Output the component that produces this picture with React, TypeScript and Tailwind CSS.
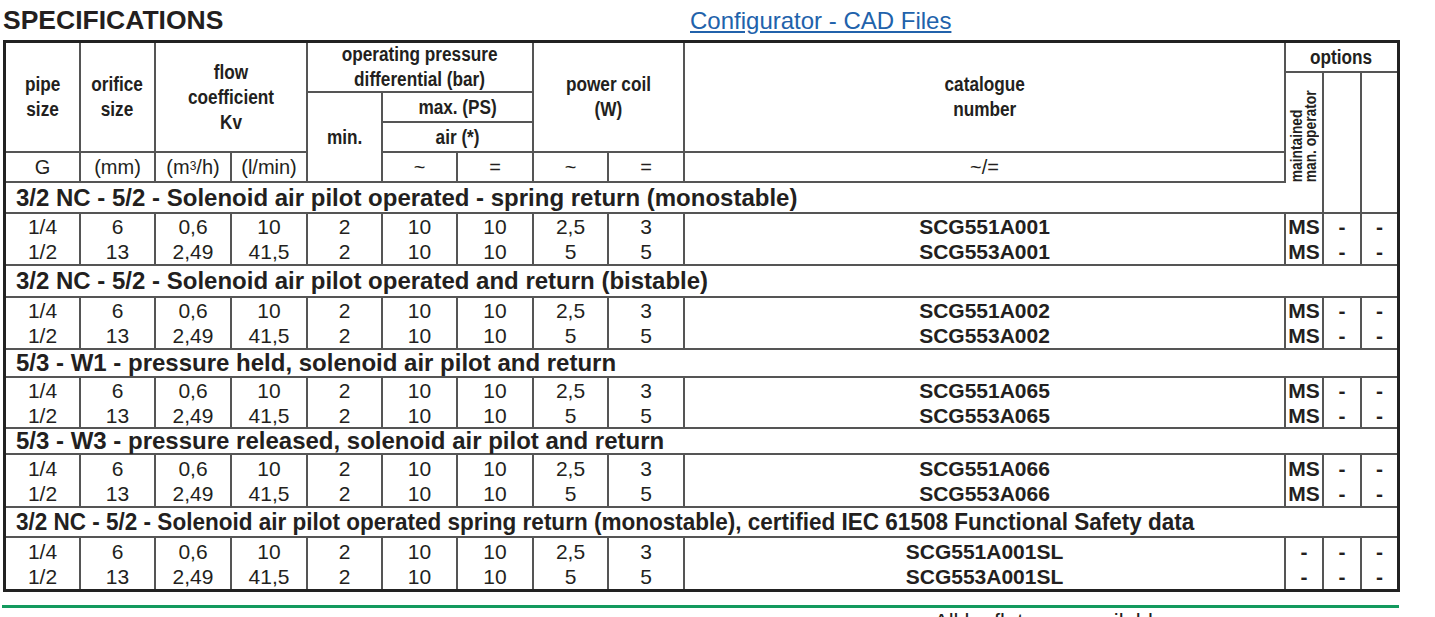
import React from "react";

const groups = [
  {
    title: "3/2 NC - 5/2 - Solenoid air pilot operated - spring return (monostable)",
    codes: ["SCG551A001", "SCG553A001"],
    ms: true,
    first: true,
  },
  {
    title: "3/2 NC - 5/2 - Solenoid air pilot operated and return (bistable)",
    codes: ["SCG551A002", "SCG553A002"],
    ms: true,
  },
  {
    title: "5/3 - W1 - pressure held, solenoid air pilot and return",
    codes: ["SCG551A065", "SCG553A065"],
    ms: true,
  },
  {
    title: "5/3 - W3 - pressure released, solenoid air pilot and return",
    codes: ["SCG551A066", "SCG553A066"],
    ms: true,
  },
  {
    title:
      "3/2 NC - 5/2 - Solenoid air pilot operated spring return (monostable), certified IEC 61508 Functional Safety data",
    codes: ["SCG551A001SL", "SCG553A001SL"],
    ms: false,
    narrow: true,
  },
];

const values: [string, string][] = [
  ["1/4", "1/2"],
  ["6", "13"],
  ["0,6", "2,49"],
  ["10", "41,5"],
  ["2", "2"],
  ["10", "10"],
  ["10", "10"],
  ["2,5", "5"],
  ["3", "5"],
];

const hd = "bg-white flex items-center justify-center text-center font-bold text-[20px] leading-[25px]";
const unit = "bg-white flex items-center justify-center text-[20px] leading-none";

function H({ className, children }: { className: string; children: React.ReactNode }) {
  return (
    <div className={hd + " " + className}>
      <div className="scale-x-[0.86] whitespace-nowrap">{children}</div>
    </div>
  );
}

function Two({ a, b, bold }: { a: string; b: string; bold?: boolean }) {
  return (
    <div
      className={
        "bg-white flex flex-col items-center justify-center text-[21px] leading-[25px] " +
        (bold ? "font-bold" : "")
      }
    >
      <span>{a}</span>
      <span>{b}</span>
    </div>
  );
}

export default function App() {
  return (
    <div className="w-[1435px] h-[617px] overflow-hidden bg-white text-[#231f20] font-['Liberation_Sans',Arial,sans-serif]">
      <div className="flex h-[40px] items-start">
        <div className="w-[690px] pl-[3px] pt-[7px] text-[26.5px] font-bold leading-none">
          SPECIFICATIONS
        </div>
        <a className="pt-[9px] text-[24px] leading-none underline text-[#2162ab]" href="#">
          Configurator - CAD Files
        </a>
      </div>

      <div className="ml-[3px] w-[1397px] grid grid-cols-[73px_73px_74px_74px_73px_73px_74px_73px_74px_599px_36px_36px_35px] grid-rows-[48px_28px_28px_28px_29px_50px_30px_50px_26px_49px_24px_51px_28px_51px] gap-[2px] bg-[#555] border-[3px] border-[#222]">
        {/* header */}
        <H className="col-start-1 row-start-1 row-span-3">
          pipe
          <br />
          size
        </H>
        <H className="col-start-2 row-start-1 row-span-3">
          orifice
          <br />
          size
        </H>
        <H className="col-start-3 col-span-2 row-start-1 row-span-3">
          flow
          <br />
          coefficient
          <br />
          Kv
        </H>
        <H className="col-start-5 col-span-3 row-start-1">
          operating pressure
          <br />
          differential (bar)
        </H>
        <H className="col-start-5 row-start-2 row-span-3">min.</H>
        <H className="col-start-6 col-span-2 row-start-2">max. (PS)</H>
        <H className="col-start-6 col-span-2 row-start-3">air (*)</H>
        <H className="col-start-8 col-span-2 row-start-1 row-span-3">
          power coil
          <br />
          (W)
        </H>
        <H className="col-start-10 row-start-1 row-span-3">
          catalogue
          <br />
          number
        </H>
        <div className="col-start-11 col-span-3 row-start-1 row-span-4 grid grid-rows-[28px_108px] gap-[2px]">
          <H className="">options</H>
          <div className="grid grid-cols-[36px_36px_35px] gap-[2px]">
            <div className="bg-white flex items-center justify-center">
              <div className="mt-[10px] [writing-mode:vertical-rl] rotate-180 scale-y-[0.86] text-left font-bold text-[16px] leading-[14px] whitespace-nowrap">
                maintained
                <br />
                man. operator
              </div>
            </div>
            <div className="bg-white" />
            <div className="bg-white" />
          </div>
        </div>

        {/* units row */}
        <div className={unit + " col-start-1 row-start-4"}>G</div>
        <div className={unit + " col-start-2 row-start-4"}>(mm)</div>
        <div className={unit + " col-start-3 row-start-4"}>
          (m<sup className="text-[12px] relative -top-[1px]">3</sup>/h)
        </div>
        <div className={unit + " col-start-4 row-start-4"}>(l/min)</div>
        <div className={unit + " col-start-6 row-start-4"}>~</div>
        <div className={unit + " col-start-7 row-start-4"}>=</div>
        <div className={unit + " col-start-8 row-start-4"}>~</div>
        <div className={unit + " col-start-9 row-start-4"}>=</div>
        <div className={unit + " col-start-10 row-start-4"}>~/=</div>

        {/* body */}
        {groups.map((g, gi) => (
          <React.Fragment key={gi}>
            {g.first ? (
              <>
                <div className="col-span-11 bg-white flex items-center pl-[10px] text-[24px] font-bold leading-none whitespace-nowrap">
                  {g.title}
                </div>
                <div className="bg-white" />
                <div className="bg-white" />
              </>
            ) : (
              <div className="col-span-full bg-white flex items-center pl-[10px] text-[24px] font-bold leading-none whitespace-nowrap">
                <span className={g.narrow ? "inline-block origin-left scale-x-[0.938]" : ""}>
                  {g.title}
                </span>
              </div>
            )}
            {values.map((v, vi) => (
              <Two key={vi} a={v[0]} b={v[1]} />
            ))}
            <Two a={g.codes[0]} b={g.codes[1]} bold />
            <Two a={g.ms ? "MS" : "-"} b={g.ms ? "MS" : "-"} bold />
            <Two a="-" b="-" bold />
            <Two a="-" b="-" bold />
          </React.Fragment>
        ))}
      </div>

      <div className="ml-[2px] mt-[13px] h-[3px] w-[1397px] bg-[#139a5e]" />
      <div className="ml-[934px] mt-[3px] text-[22px] leading-none whitespace-nowrap">
        All leaflets are available on: www.asco.com
      </div>
    </div>
  );
}
